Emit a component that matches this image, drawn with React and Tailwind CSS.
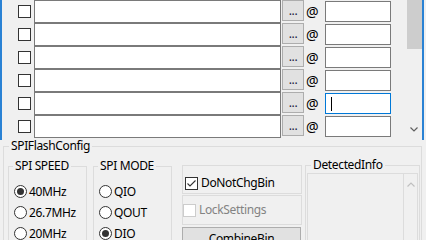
import React from "react";

function CheckBox({ checked = false, disabled = false }) {
  return (
    <div
      className={
        disabled
          ? "w-[13px] h-[13px] shrink-0 border border-[#cccccc] bg-white"
          : "w-[13px] h-[13px] shrink-0 border border-[#333333] bg-white"
      }
    >
      {checked && (
        <svg width="11" height="11" viewBox="0 0 11 11" className="block">
          <polyline points="1.5,5.5 4,8 9.5,2.5" fill="none" stroke="#333333" strokeWidth="1.1" />
        </svg>
      )}
    </div>
  );
}

function Radio({ checked = false, label }) {
  return (
    <div className="h-[21px] flex items-center">
      <div className="ml-[5px] w-[13px] h-[13px] shrink-0 rounded-full border border-[#333333] bg-white flex items-center justify-center">
        {checked && <div className="w-[7px] h-[7px] rounded-full bg-[#333333]" />}
      </div>
      <span className="ml-[2px] leading-[16px] whitespace-nowrap">{label}</span>
    </div>
  );
}

export default function App() {
  const rows = [0, 1, 2, 3, 4, 5];
  return (
    <div className="w-[426px] h-[240px] overflow-hidden bg-[#f0f0f0] font-['Noto_Sans',sans-serif] text-[12px] tracking-[-0.35px] text-black">
      <div className="w-[424px] h-[140px] flex border-x-2 border-[#2a82d4]">
        <div className="w-[403px] flex flex-col">
          {rows.map((i) => (
            <div key={i} className="h-[23px] shrink-0 flex items-start">
              <div className="ml-[16px] mt-[5px]">
                <CheckBox />
              </div>
              <div className="ml-[3px] w-[247px] h-[23px] border border-[#7a7a7a] bg-white" />
              <div className="ml-[1px] w-[22px] h-[21px] border border-[#adadad] bg-[#e1e1e1] flex items-center justify-center leading-[16px] text-[#1a1a40]">
                ...
              </div>
              <div className="ml-[2px] w-[19px] pt-[4px] leading-[16px] text-[14px] tracking-normal">@</div>
              <div
                className={
                  i === 4
                    ? "mt-[1px] w-[66px] h-[21px] border border-[#0078d7] bg-white flex"
                    : "mt-[1px] w-[66px] h-[21px] border border-[#7a7a7a] bg-white flex"
                }
              >
                {i === 4 && <div className="ml-[5px] mt-[3px] w-[1px] h-[14px] bg-black" />}
              </div>
            </div>
          ))}
        </div>
        <div className="w-[17px] h-[140px] bg-[#f0f0f0] flex flex-col">
          <div className="ml-[2px] w-[15px] h-[49px] bg-[#cdcdcd]" />
          <div className="flex-1" />
          <div className="h-[17px] mb-[2px] flex items-center justify-center">
            <svg width="8" height="5" viewBox="0 0 8 5">
              <polyline points="0.5,0.5 4,4 7.5,0.5" fill="none" stroke="#606060" strokeWidth="1.2" />
            </svg>
          </div>
        </div>
      </div>

      <fieldset className="ml-[3px] w-[419px] h-[120px] border border-[#dcdcdc]">
        <legend className="ml-[5px] px-[2px] leading-[12px]">SPIFlashConfig</legend>
        <div className="flex items-start">
          <fieldset className="ml-[4px] mt-[8px] w-[79px] h-[100px] border border-[#dcdcdc]">
            <legend className="ml-[4px] px-[2px] leading-[12px]">SPI SPEED</legend>
            <div className="mt-[9px] flex flex-col">
              <Radio checked label="40MHz" />
              <Radio label="26.7MHz" />
              <Radio label="20MHz" />
            </div>
          </fieldset>
          <fieldset className="ml-[6px] mt-[8px] w-[79px] h-[100px] border border-[#dcdcdc]">
            <legend className="ml-[4px] px-[2px] leading-[12px]">SPI MODE</legend>
            <div className="mt-[9px] flex flex-col">
              <Radio label="QIO" />
              <Radio label="QOUT" />
              <Radio checked label="DIO" />
            </div>
          </fieldset>
          <div className="ml-[10px] mt-[13px] w-[120px] flex flex-col">
            <div className="h-[29px] border border-[#dcdcdc] pt-[9px] pl-[2px] flex items-start">
              <div className="flex items-center">
                <CheckBox checked />
                <span className="ml-[3px] leading-[16px]">DoNotChgBin</span>
              </div>
            </div>
            <div className="mt-[1px] h-[30px] border border-[#dcdcdc] pt-[6px] flex items-start">
              <div className="flex items-center">
                <CheckBox disabled />
                <span className="ml-[3px] leading-[16px] text-[#838383]">LockSettings</span>
              </div>
            </div>
            <div className="mt-[2px] w-[119px] h-[23px] border border-[#adadad] bg-[#e1e1e1] flex items-center justify-center leading-[16px]">
              CombineBin
            </div>
          </div>
          <fieldset className="ml-[3px] mt-[7px] w-[115px] h-[100px] border border-[#dcdcdc]">
            <legend className="ml-[5px] px-[2px] leading-[12px]">DetectedInfo</legend>
            <div className="ml-[1px] mt-[2px] w-[111px] h-[80px] border border-[#dcdcdc] bg-[#f0f0f0] flex justify-end">
              <div className="w-[14px] border-l border-[#dcdcdc] flex flex-col items-center pt-[8px]">
                <svg width="8" height="5" viewBox="0 0 8 5">
                  <polyline points="0.5,4.5 4,1 7.5,4.5" fill="none" stroke="#c0c0c0" strokeWidth="1.2" />
                </svg>
              </div>
            </div>
          </fieldset>
        </div>
      </fieldset>
    </div>
  );
}
